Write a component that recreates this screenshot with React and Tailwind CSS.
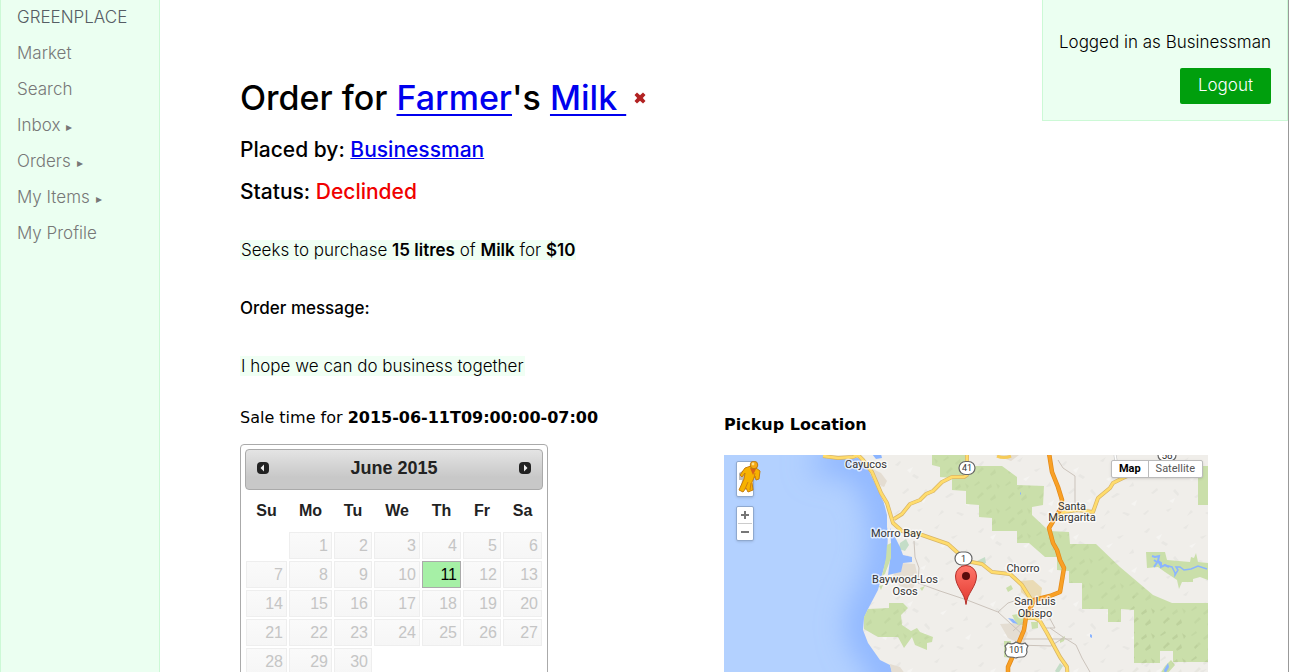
import React from "react";

const SANS = "font-['Inter','Open_Sans',sans-serif]";

const NAV = [
  { label: "Market" },
  { label: "Search" },
  { label: "Inbox", menu: true },
  { label: "Orders", menu: true },
  { label: "My Items", menu: true },
  { label: "My Profile" },
];

function Sidebar() {
  return (
    <nav className={`${SANS} w-40 shrink-0 border-x border-[#ccf9d6] bg-[#ebfff1] text-[17px] font-light text-[#777]`}>
      <a href="#home" className="flex h-9 items-center px-4 text-[#565d64]">GREENPLACE</a>
      <ul>
        {NAV.map((item) => (
          <li key={item.label}>
            <a href="#menu" className="flex h-9 items-center px-4">
              {item.label}
              {item.menu && <span className="ml-1.5 pt-0.5 font-['DejaVu_Sans',sans-serif] text-xs">▸</span>}
            </a>
          </li>
        ))}
      </ul>
    </nav>
  );
}

function Account() {
  return (
    <div className={`${SANS} absolute top-0 right-0 border border-t-0 border-[#ccf9d6] bg-[#ebfff1] px-4 pt-[30px] pb-4`}>
      <p className="text-[17px] leading-6 font-light text-black">Logged in as Businessman</p>
      <div className="mt-3.5 flex justify-end">
        <button type="button" className="h-9 rounded-xs bg-[#009f0d] px-[18px] text-[17px] font-light text-white">Logout</button>
      </div>
    </div>
  );
}

const WEEKS = [
  [0, 1, 2, 3, 4, 5, 6],
  [7, 8, 9, 10, 11, 12, 13],
  [14, 15, 16, 17, 18, 19, 20],
  [21, 22, 23, 24, 25, 26, 27],
  [28, 29, 30, 0, 0, 0, 0],
];

function Arrow({ next }) {
  return (
    <svg viewBox="0 0 12 12" className="size-3" aria-hidden="true">
      <rect width="12" height="12" rx="4" fill="#222" />
      <path d={next ? "M5 2.500v7l3.500-3.500z" : "M7 2.500v7L3.500 6z"} fill="#eee" />
    </svg>
  );
}

function Calendar() {
  return (
    <div className="mt-3.5 w-[308px] rounded-[4px] border border-[#aaa] bg-white p-1 font-['Liberation_Sans',Arial,sans-serif] text-[#222]">
      <div className="flex h-[41px] items-center justify-between rounded-[4px] border border-[#aaa] bg-linear-to-b from-[#e4e4e4] to-[#c8c8c8] to-70% px-[11px] pb-1">
        <button type="button" aria-label="Previous month"><Arrow /></button>
        <span className="text-[18px] leading-7 font-bold">June 2015</span>
        <button type="button" aria-label="Next month"><Arrow next /></button>
      </div>
      <table className="w-full table-fixed border-collapse text-base">
        <colgroup>
          <col className="w-[43px]" />
          <col className="w-[45px]" />
          <col className="w-[40px]" />
          <col className="w-[48px]" />
          <col className="w-[41px]" />
          <col className="w-[40px]" />
          <col className="w-[41px]" />
        </colgroup>
        <thead>
          <tr className="h-[41px]">
            {["Su", "Mo", "Tu", "We", "Th", "Fr", "Sa"].map((d) => (
              <th key={d} scope="col" className="p-0 text-center font-bold">{d}</th>
            ))}
          </tr>
        </thead>
        <tbody>
          {WEEKS.map((week, w) => (
            <tr key={w}>
              {week.map((day, i) => (
                <td key={i} className="p-px">
                  {day === 11 && (
                    <button type="button" className="block h-[27px] w-full border border-[#aaa] bg-[#a6f0a6] pr-[3px] text-right text-black">11</button>
                  )}
                  {day > 0 && day !== 11 && (
                    <button type="button" disabled className="block h-[27px] w-full border border-[#eee] bg-linear-to-b from-[#fafafa] to-[#f6f6f6] pr-[3px] text-right text-[#c5c5c5]">{day}</button>
                  )}
                </td>
              ))}
            </tr>
          ))}
        </tbody>
      </table>
    </div>
  );
}

const COAST = "99,-2 102,3 110,4 134,3 141,8 148,22 154,35 160,48 163,60 163,72 164,78 163,102 158,120 154,135 144,154 140,163 139,175 144,188 156,205 166,210 169,220 180,400";
const RIDGE = "208,0 208,10 216,12 216,22 228,23 228,35 242,36 242,49 255,50 255,62 268,63 268,76 293,76 293,88 305,88 321,102 333,102 333,115 345,116 345,128 358,128 358,154 384,154 384,167 397,167 397,154 410,155 410,208 436,208 436,196 449,196 449,207 484,207 484,148 448,148 429,140 396,112 372,89 346,89 345,77 325,76 308,60 308,52 319,50 320,31 293,30 293,22 278,11 245,11 244,0";
const HWY1 = "M99 1 114 3 129 2 134 0 139 5 148 17 157 38 163 48 169 68 178 76 198 80 224 89 234 98 242 106 258 109 268 117 286 119 298 130 308 146";
const HWY41 = "M170 64 178 59 186 49 196 45 202 39 209 36 218 27 228 22 240 22 243 20V0";
const HWY58 = "M333 62 340 57 353 55 369 57 374 43 386 33 389 28 399 23 415 16 426 13";
const SOUTH = "M303 163H311L316 166 323 178 336 202 343 212 344 230";
const US101 = "M325 -2 328 17 334 32 338 45 337 53 325 73 329 88 333 95 336 105 340 113 336 137 326 141 310 145 302 162 300 175 295 187 288 203 284 212V230";

function MapLabel({ x, y, children }) {
  return (
    <text x={x} y={y} textAnchor="middle" fill="#333" stroke="#fff" strokeWidth="3" strokeLinejoin="round" paintOrder="stroke" strokeOpacity="0.7">{children}</text>
  );
}

function MapDrawing() {
  return (
    <svg viewBox="0 0 484 400" preserveAspectRatio="xMidYMin slice" className="h-full w-full font-['Roboto',sans-serif] text-[11px]" role="img" aria-label="Map of the pickup location">
      <defs>
        <filter id="shelf" filterUnits="userSpaceOnUse" x="-60" y="-60" width="400" height="520"><feGaussianBlur stdDeviation="15" /></filter>
        <pattern id="terrain" width="83" height="67" patternUnits="userSpaceOnUse">
          <path d="M5 10l5-4 1 1-3 4zM24 19l5 3-2 2-5-3zM44 6l6-4-3 5zM61 15l7-2-5 4zM12 38l6-5 1 2-5 4zM36 34l4 5-1 2-5-5zM55 42l6-4 3 1-7 4zM73 32l4-5 1 4zM4 59l5-4 1 1-4 4zM27 55l6-2-4 4zM48 61l4-6 2 2zM68 57l6 2-2 2-6-3z" fill="#000" fillOpacity="0.03" />
          <path d="M17 15l6-3-3 6zM50 24l7-3-4 5zM30 46l6-3-2 5zM75 49l6-4-2 6z" fill="#fff" fillOpacity="0.35" />
        </pattern>
        <pattern id="hills" width="31" height="25" patternUnits="userSpaceOnUse">
          <path d="M2 5l5-4 1 2-5 3zM14 8l5-4 1 3-5 3zM24 3l4 3-2 3zM5 17l5-5 2 2-6 5zM18 19l5-5 1 4-5 3z" fill="#4c6b30" fillOpacity="0.06" />
        </pattern>
        <linearGradient id="pin" x1="0" y1="0" x2="0" y2="1">
          <stop offset="0" stopColor="#ff776b" /><stop offset="1" stopColor="#e2382f" />
        </linearGradient>
      </defs>
      <rect width="484" height="400" fill="#b3d1ff" />
      <polyline points={COAST} fill="none" stroke="#84aeff" strokeWidth="32" strokeOpacity="0.85" filter="url(#shelf)" />
      <polygon points={`${COAST} 484,400 484,-2`} fill="#f0eeea" />
      <polygon points={`${COAST} 484,400 484,-2`} fill="url(#terrain)" />
      <path d="M149 14l8 4 6 8-3 6-6-3zM177 108l14 1 3 14-6 12-12-4-8-9zM276 169l20-1 8 10-5 12-15-7zM166 209l10 3 6 8h-14zM271 0h24l-8 6z" fill="#e4ddd2" />
      <path d="M296 126l13-1 9 8-1 8-12 3-8-7z" fill="#eadbb5" />
      <path d="M176 88l6-4 3 6-4 6-6-2zM253 106l8-4 1 6-6 3zM331 216l5-8 3 3-5 8z" fill="#c4ddc7" />
      <path d="M148 -1h9l1 4-6 1z" fill="#8ab4ff" />
      <polygon points="166,73 171,82 176,92 179,100 188,102 188,107 179,108 177,117 164,120 166,105 167,88" fill="#90b8ff" />
      <g fill="#cadfaa">
        <path d="M163 90l4-2v15l-6 16-3 2 4-18zM99 0h8l-4 4zM155 131l4-1-2 5zM196 133l5-2-3 5zM282 133l5-3 2 4-5 3zM288 160l12-2 2 12h-9zM307 167h7v6l-6 1zM336 184l5-3-1 5-4 2zM280 186h7v17l-7-1zM441 211l6-6 4 5-8 9h-7z" />
        <polygon points={RIDGE} />
        <rect x="474" y="11" width="10" height="39" />
        <polygon points="422,97 441,97 443,105 466,107 467,102 470,103 472,98 474,107 484,108 484,125 476,122 469,124 469,127 458,127 455,134 453,125 441,117 434,112 423,113" />
        <polygon points="144,154 165,153 165,148 179,148 184,153 177,160 178,170 187,176 193,173 196,177 209,182 208,187 203,188 203,195 191,190 188,182 180,193 174,182 154,182 140,174 140,162" />
      </g>
      <g fill="url(#hills)">
        <polygon points={RIDGE} />
        <path d="M144 154l40-2-6 20 30 11-16 7-38-8-14-8zM410 208v-44l-13-10v-20l60 30 27 43v13h-90z" />
      </g>
      <path d="M428 101l3 1 4-1-1 5 3 5M430 112l4-6 3 2v4l4-2 4 2M430 105l4 3" fill="none" stroke="#8ab4ff" strokeWidth="2" />
      <path d="M440 110l8 2 3 6v2l3-5-2-3h4l4 3 7-1 7-3 9 3" fill="none" stroke="#8ab4ff" strokeWidth="1.500" />
      <path d="M284 163l5 1 5 5-5-1zM366 179l2 1v3l-2-1zM440 215l4-7 1 4-4 7zM296 37l1 1v2l-1-1z" fill="#8ab4ff" />
      <g fill="none" stroke="#cbc3bb" strokeWidth="1">
        <path d="M190 86l1 16 4 11-1 15 22 8 27 9 31 12 25 23M274 157l10-9 12-4 12-1M289 176l21-19M299 184h49M292 190l35 1 12-8M326 173l13 9 13 8 6 13 8 14M334 5l5 8 12 8v28M325 162l6 11h-12" />
      </g>
      <g fill="none" strokeLinejoin="round">
        <g stroke="#d7b467" strokeWidth="4"><path d={HWY1} /><path d={HWY41} /><path d={HWY58} /><path d={SOUTH} /></g>
        <g stroke="#ffdc6c" strokeWidth="2.6"><path d={HWY1} /><path d={HWY41} /><path d={HWY58} /><path d={SOUTH} /></g>
        <path d="M273 1q7 3 14 0" stroke="#f5cb59" strokeWidth="3" />
        <path d="M391 0l4 22" stroke="#ccc" strokeWidth="3" />
        <path d="M391 0l4 22" stroke="#fff" strokeWidth="1.5" />
        <path d={US101} stroke="#e38a19" strokeWidth="4.5" />
        <path d={US101} stroke="#f9a126" strokeWidth="3" />
      </g>
      <g fill="#fff" stroke="#666" strokeWidth="1.2">
        <rect x="235" y="6.500" width="16" height="13" rx="6.500" />
        <rect x="231" y="97" width="17" height="13" rx="6.500" />
        <rect x="434" y="-6" width="18" height="12" rx="6" />
        <path d="M284 188q5 2 8-1 5 3 9 1l3 3q-2 3-1 6-1 5-5 5-4 0-6 1-3-1-6-1-4 0-5-5 2-3 0-6z" />
      </g>
      <g fill="#333" fontSize="9" textAnchor="middle">
        <text x="243" y="16">41</text>
        <text x="239.500" y="107">1</text>
        <text x="443" y="4" fontSize="10">58</text>
        <text x="292.500" y="198">101</text>
      </g>
      <MapLabel x="142" y="13">Cayucos</MapLabel>
      <MapLabel x="172" y="82">Morro Bay</MapLabel>
      <MapLabel x="181" y="128">Baywood-Los</MapLabel>
      <MapLabel x="181" y="140">Osos</MapLabel>
      <MapLabel x="348" y="55">Santa</MapLabel>
      <MapLabel x="348" y="66">Margarita</MapLabel>
      <MapLabel x="299" y="117">Chorro</MapLabel>
      <MapLabel x="311" y="150">San Luis</MapLabel>
      <MapLabel x="311" y="162">Obispo</MapLabel>
      <path d="M242 149.500C241 138 231.500 132 231.500 121a10.500 10.500 0 0 1 21 0C252.500 132 243 138 242 149.500z" fill="url(#pin)" stroke="#b5302a" />
      <circle cx="242" cy="121" r="4" fill="#5a0c0c" />
    </svg>
  );
}

function PickupMap() {
  return (
    <div className="relative mt-[18px] h-[400px] overflow-hidden bg-[#b3d1ff] font-['Roboto',sans-serif] text-[11px]">
      <MapDrawing />
      <button type="button" aria-label="Street View" className="absolute top-1.5 left-3 h-9 w-[18px] rounded-xs border border-[#8fa9cf] bg-white shadow">
        <svg viewBox="0 0 24 34" className="absolute -top-px left-0 h-[34px] w-6 max-w-none" aria-hidden="true">
          <path d="M2 12l5-3 6 4v10l-5 6-4-2 1-8H2z" fill="#bbb" />
          <path d="M8 7l6-2 5 2 4 3-1 8-3 1-1-4-3 6 1 8-5 2-2-4-3 4-4-2 5-11 1-6-3 4-2-2z" fill="#f7b200" stroke="#c67c0b" strokeWidth="1" />
          <path d="M13 7l6 1-3 6z" fill="#d9621a" />
          <path d="M11 21l-3 7M14 22l-1 7M18 12l-1 5" stroke="#d08012" strokeWidth="1" />
          <circle cx="17" cy="4" r="3.800" fill="#f5a913" stroke="#a8690d" strokeWidth="0.8" />
          <circle cx="16" cy="3" r="1.400" fill="#ffe08a" />
        </svg>
      </button>
      <div className="absolute top-[51px] left-3 flex h-[35px] w-[18px] flex-col items-center rounded-xs border border-[#8fa9cf] bg-white shadow">
        <button type="button" aria-label="Zoom in" className="flex w-3.5 flex-1 items-center justify-center border-b border-[#ccc]">
          <svg viewBox="0 0 8 8" className="size-2" aria-hidden="true"><path d="M3 0h2v3h3v2H5v3H3V5H0V3h3z" fill="#777" /></svg>
        </button>
        <button type="button" aria-label="Zoom out" className="flex w-3.5 flex-1 items-center justify-center">
          <svg viewBox="0 0 8 8" className="size-2" aria-hidden="true"><path d="M0 3h8v2H0z" fill="#777" /></svg>
        </button>
      </div>
      <div className="absolute top-[5px] right-[5px] flex h-[18px] rounded-xs border border-[#bbb] bg-white shadow">
        <button type="button" className="px-[7px] font-bold text-black">Map</button>
        <button type="button" className="border-l border-[#bbb] px-[7px] text-[#565656]">Satellite</button>
      </div>
    </div>
  );
}

export default function App() {
  return (
    <div className="relative flex h-screen overflow-hidden border-r border-[#999] bg-white text-base text-black">
      <Sidebar />
      <main className="min-w-0 flex-1 px-20 pt-20">
        <div className={`${SANS} text-[17px]`}>
          <h1 className="flex items-center text-[34px] leading-9 font-medium">
            <span className="whitespace-pre">
              Order for <a href="#farmer" className="text-[#00e] underline decoration-2 underline-offset-4">Farmer</a>'s{" "}
              <a href="#milk" className="text-[#00e] underline decoration-2 underline-offset-4">Milk </a>
            </span>
            <button type="button" aria-label="Remove order" className="ml-2">
              <svg viewBox="0 0 12 12" className="size-3" aria-hidden="true">
                <path d="M3 0.500 6 3.200 9 0.500 11.500 3 8.800 6 11.500 9 9 11.500 6 8.800 3 11.500 0.500 9 3.200 6 0.500 3z" fill="#b22222" />
              </svg>
            </button>
          </h1>
          <h2 className="mt-[22px] text-[21px] leading-6 font-medium">
            Placed by: <a href="#businessman" className="text-[#00e] underline decoration-1">Businessman</a>
          </h2>
          <h2 className="mt-[18px] text-[21px] leading-6 font-medium">
            Status: <span className="text-[#f00000]">Declinded</span>
          </h2>
          <p className="mt-[34px] leading-6 font-light">
            <span className="bg-[#f0fff4] px-px">
              Seeks to purchase <b className="font-semibold">15 litres</b> of <b className="font-semibold">Milk</b> for <b className="font-semibold">$10</b>
            </span>
          </p>
          <h3 className="mt-[34px] leading-6 font-medium">Order message:</h3>
          <p className="mt-[34px] leading-6 font-light">
            <span className="bg-[#f0fff4] px-px">I hope we can do business together</span>
          </p>
        </div>
        <div className="mt-7 grid grid-cols-2 font-['DejaVu_Sans',sans-serif]">
          <section>
            <p className="leading-6">Sale time for <b>2015-06-11T09:00:00-07:00</b></p>
            <Calendar />
          </section>
          <section className="pt-[7px]">
            <h3 className="leading-6 font-bold">Pickup Location</h3>
            <PickupMap />
          </section>
        </div>
      </main>
      <Account />
    </div>
  );
}
